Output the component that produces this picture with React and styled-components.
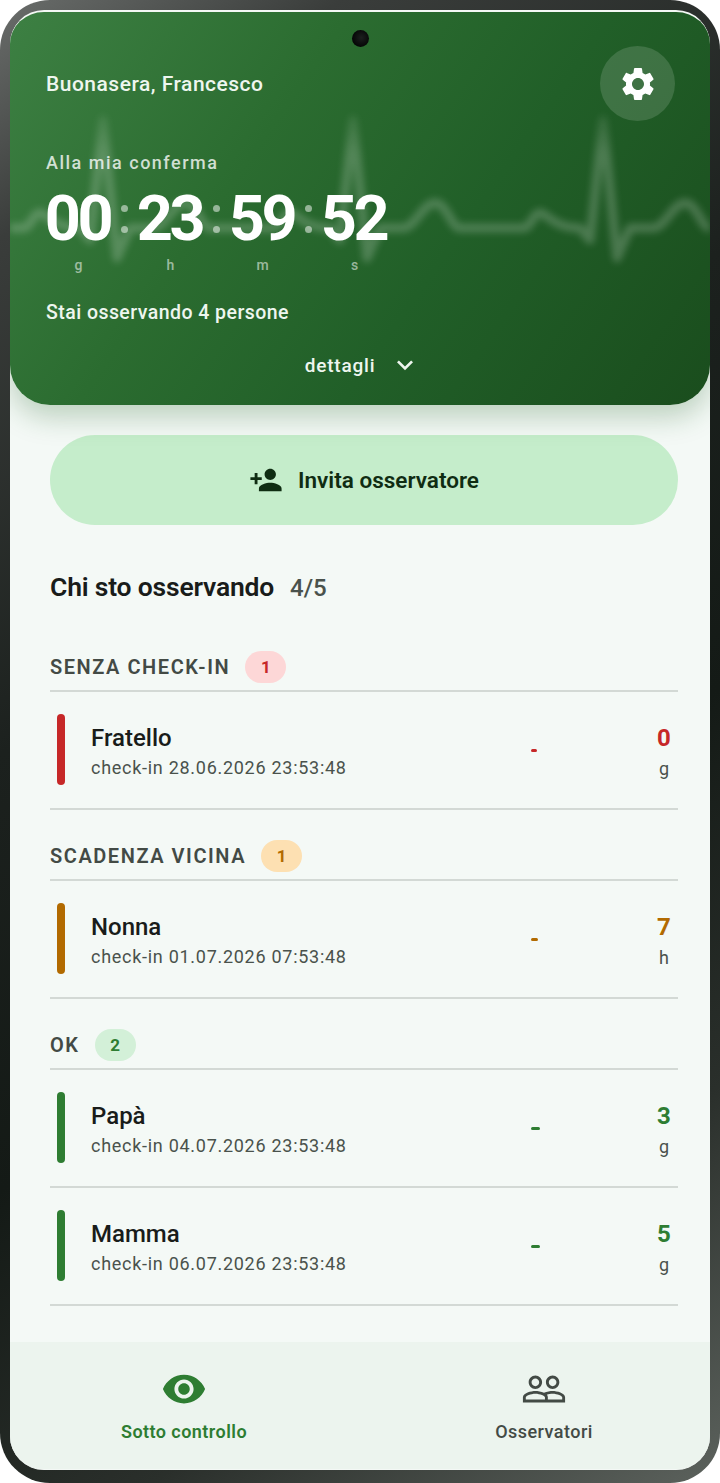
import React from 'react';
import styled, { createGlobalStyle } from 'styled-components';
import { MdSettings, MdPersonAdd, MdVisibility, MdPeopleOutline, MdKeyboardArrowDown } from 'react-icons/md';

const GlobalStyle = createGlobalStyle`
  html, body {
    margin: 0;
    padding: 0;
    background: #fff;
    font-family: Roboto, "Liberation Sans", sans-serif;
  }
  * { box-sizing: border-box; }
`;

// one heartbeat every 250px, c is the x of the spike
const buildWave = () => {
  let d = 'M0 228';
  [103, 353, 603].forEach((c) => {
    d += ` L${c - 80} 228 C${c - 72} 228 ${c - 70} 213 ${c - 63} 213 C${c - 56} 213 ${c - 50} 228 ${c - 23} 228`;
    d += ` L${c - 13} 240 L${c} 120 L${c + 14} 258 L${c + 27} 228 L${c + 50} 228`;
    d += ` C${c + 62} 228 ${c + 70} 203 ${c + 82} 203 C${c + 94} 203 ${c + 98} 228 ${c + 107} 228`;
  });
  return d;
};

const Device = styled.div`
  width: 720px;
  height: 1483px;
  padding: 10px 10px 13px;
  border-radius: 50px;
  background: linear-gradient(145deg, #6a6d6b 0%, #3a3d3b 12%, #1c211e 38%, #141a16 60%, #2a2f2b 80%, #5c625d 100%);
`;

const Screen = styled.div`
  position: relative;
  height: 100%;
  border-radius: 34px;
  overflow: hidden;
  background: #f4f9f6;
  display: flex;
  flex-direction: column;
  border-top: 2px solid #f4f8f5;
  border-bottom: 1px solid #f4f8f5;
`;

const HeroLayer = styled.div`
  position: relative;
  z-index: 1;
  flex: none;
`;

const Hero = styled.header`
  position: relative;
  height: 393px;
  padding: 0 36px;
  border-radius: 0 0 40px 40px;
  overflow: hidden;
  color: #fff;
  background: linear-gradient(125deg, #3d8043 0%, #2b6c30 35%, #215f28 62%, #1a4d1d 100%);
`;

const HeroGlow = styled.div`
  position: absolute;
  inset: 0;
  border-radius: 0 0 40px 40px;
  box-shadow: 0 12px 28px rgba(27, 94, 32, 0.26);
`;

const WaveSvg = styled.svg`
  position: absolute;
  left: 0;
  top: -12px;
  width: 700px;
  height: 405px;
  pointer-events: none;
  filter: blur(3.5px);
`;

const Camera = styled.div`
  position: absolute;
  top: 18px;
  left: 342px;
  width: 17px;
  height: 17px;
  border-radius: 50%;
  background: radial-gradient(circle at 55% 45%, #1c1f1e 0%, #050606 70%);
  z-index: 2;
`;

const GreetingRow = styled.div`
  position: relative;
  display: flex;
  justify-content: space-between;
  align-items: center;
  padding-top: 34px;
  margin-right: -1px;
`;

const Greeting = styled.div`
  font-size: 21px;
  font-weight: 500;
  letter-spacing: 0.5px;
  color: #eef6ef;
`;

const SettingsButton = styled.div`
  width: 75px;
  height: 75px;
  border-radius: 50%;
  background: rgba(255, 255, 255, 0.14);
  display: flex;
  align-items: center;
  justify-content: center;
  font-size: 40px;
  color: #fff;
`;

const TimerLabel = styled.div`
  position: relative;
  margin-top: 31px;
  font-size: 18px;
  font-weight: 500;
  letter-spacing: 1.5px;
  color: rgba(255, 255, 255, 0.78);
  line-height: 22px;
`;

const Timer = styled.div`
  position: relative;
  display: flex;
  margin-top: 13px;
`;

const TimeUnit = styled.div`
  width: 65px;
  display: flex;
  flex-direction: column;
  align-items: center;
`;

const Digits = styled.div`
  font-size: 63px;
  font-weight: 700;
  line-height: 64px;
  letter-spacing: -3.5px;
  margin-right: 2px;
  color: #fff;
  white-space: nowrap;
`;

const UnitLabel = styled.div`
  margin-top: 6px;
  font-size: 14px;
  line-height: 16px;
  font-weight: 500;
  color: rgba(255, 255, 255, 0.55);
`;

const Separator = styled.div`
  width: 27px;
  height: 64px;
  display: flex;
  flex-direction: column;
  align-items: center;
  justify-content: center;
  gap: 14px;
  padding-bottom: 1px;

  span {
    width: 7px;
    height: 7px;
    border-radius: 50%;
    background: rgba(255, 255, 255, 0.5);
  }
`;

const Watching = styled.div`
  position: relative;
  margin-top: 28px;
  font-size: 19.5px;
  line-height: 24px;
  font-weight: 500;
  letter-spacing: 0.45px;
  color: #eef6ef;
`;

const DetailsToggle = styled.div`
  position: relative;
  margin-top: 24px;
  padding-left: 6px;
  display: flex;
  justify-content: center;
  align-items: center;
  gap: 14px;
  font-size: 19px;
  font-weight: 500;
  letter-spacing: 0.8px;
  color: #eef6ef;

  svg { font-size: 32px; }
`;

const Body = styled.main`
  flex: 1;
  padding: 30px 32px 0 40px;
`;

const InviteButton = styled.div`
  height: 90px;
  border-radius: 45px;
  background: #c5edcb;
  display: flex;
  align-items: center;
  justify-content: center;
  gap: 15px;
  font-size: 22.5px;
  font-weight: 600;
  color: #0f2c12;

  svg { font-size: 34px; }
`;

const ListTitle = styled.div`
  margin-top: 46px;
  display: flex;
  align-items: baseline;
  gap: 16px;
  height: 32px;
`;

const TitleText = styled.h2`
  margin: 0;
  font-size: 26.5px;
  font-weight: 600;
  letter-spacing: -0.2px;
  line-height: 32px;
  color: #191c1a;
`;

const TitleCount = styled.span`
  font-size: 24px;
  font-weight: 500;
  color: #4a524c;
`;

const GroupHeader = styled.div`
  height: 48px;
  margin-top: ${(p) => p.$top}px;
  display: flex;
  align-items: center;
  gap: 15px;
  border-bottom: 2px solid #d3d9d5;
  font-size: 20px;
  font-weight: 600;
  letter-spacing: 1.55px;
  color: #434a45;
`;

const Count = styled.span`
  width: 41px;
  height: 32px;
  border-radius: 16px;
  display: flex;
  align-items: center;
  justify-content: center;
  font-size: 17px;
  font-weight: 700;
  letter-spacing: 0;
  background: ${(p) => p.$bg};
  color: ${(p) => p.$fg};
`;

const Row = styled.div`
  height: 118px;
  display: flex;
  align-items: center;
  padding: 0 6px 0 7px;
  border-bottom: 2px solid #d3d9d5;
`;

const StatusBar = styled.div`
  width: 8px;
  height: 71px;
  margin-bottom: 2px;
  border-radius: 4px;
  background: ${(p) => p.$color};
`;

const Person = styled.div`
  margin-left: 26px;
  padding-top: 2px;
  flex: 1;
`;

const Name = styled.div`
  font-size: 24px;
  font-weight: 500;
  line-height: 30px;
  color: #191c1a;
`;

const LastCheck = styled.div`
  margin-top: 3px;
  font-size: 18px;
  line-height: 24px;
  letter-spacing: 0.72px;
  color: #4a524c;
`;

const DashSlot = styled.div`
  width: 125px;
`;

const Dash = styled.div`
  width: ${(p) => p.$width}px;
  height: 3px;
  border-radius: 2px;
  background: ${(p) => p.$color};
`;

const Remaining = styled.div`
  width: 16px;
  padding-top: 4px;
  display: flex;
  flex-direction: column;
  align-items: center;
`;

const RemainingValue = styled.div`
  font-size: 24px;
  font-weight: 700;
  line-height: 30px;
  color: ${(p) => p.$color};
`;

const RemainingUnit = styled.div`
  margin-top: 4px;
  font-size: 18px;
  line-height: 24px;
  color: #4a524c;
`;

const BottomNav = styled.nav`
  flex: none;
  height: 127px;
  padding-left: 14px;
  display: grid;
  grid-template-columns: 320px 320px;
  column-gap: 40px;
  background: #ecf4ee;
`;

const NavItem = styled.div`
  display: flex;
  flex-direction: column;
  align-items: center;
  padding-top: 24px;
  font-size: 18px;
  line-height: 24px;
  letter-spacing: 0.45px;
  font-weight: ${(p) => (p.$active ? 600 : 500)};
  color: ${(p) => (p.$active ? '#2e7d32' : '#434a45')};

  svg { font-size: 46px; margin-bottom: 8px; }
`;

const RED = '#c62828';
const AMBER = '#b26a00';
const GREEN = '#2e7d32';

const groups = [
  {
    title: 'SENZA CHECK-IN', top: 41, badgeBg: '#fdd7d7', badgeFg: RED, color: RED, dash: 6,
    people: [{ name: 'Fratello', date: '28.06.2026 23:53:48', value: '0', unit: 'g' }],
  },
  {
    title: 'SCADENZA VICINA', top: 23, badgeBg: '#fde0b2', badgeFg: AMBER, color: AMBER, dash: 7,
    people: [{ name: 'Nonna', date: '01.07.2026 07:53:48', value: '7', unit: 'h' }],
  },
  {
    title: 'OK', top: 23, badgeBg: '#d3f0d8', badgeFg: GREEN, color: GREEN, dash: 9,
    people: [
      { name: 'Papà', date: '04.07.2026 23:53:48', value: '3', unit: 'g' },
      { name: 'Mamma', date: '06.07.2026 23:53:48', value: '5', unit: 'g' },
    ],
  },
];

const Unit = ({ value, label }) => (
  <TimeUnit>
    <Digits>{value}</Digits>
    <UnitLabel>{label}</UnitLabel>
  </TimeUnit>
);

const Dots = () => (
  <Separator>
    <span />
    <span />
  </Separator>
);

const App = () => (
  <>
    <GlobalStyle />
    <Device>
      <Screen>
        <HeroLayer>
          <HeroGlow />
          <Hero>
            <WaveSvg viewBox="0 0 700 405" fill="none">
              <defs>
                <linearGradient id="waveFade" x1="0" y1="108" x2="0" y2="260" gradientUnits="userSpaceOnUse">
                  <stop offset="0" stopColor="#fff" stopOpacity="0.06" />
                  <stop offset="0.3" stopColor="#fff" stopOpacity="0.2" />
                  <stop offset="1" stopColor="#fff" stopOpacity="0.2" />
                </linearGradient>
              </defs>
              <path
                d={buildWave()}
                transform="translate(-10 0)"
                stroke="url(#waveFade)"
                strokeWidth="9"
                strokeLinejoin="round"
                strokeLinecap="round"
              />
            </WaveSvg>
            <Camera />
            <GreetingRow>
              <Greeting>Buonasera, Francesco</Greeting>
              <SettingsButton>
                <MdSettings />
              </SettingsButton>
            </GreetingRow>
            <TimerLabel>Alla mia conferma</TimerLabel>
            <Timer>
              <Unit value="00" label="g" />
              <Dots />
              <Unit value="23" label="h" />
              <Dots />
              <Unit value="59" label="m" />
              <Dots />
              <Unit value="52" label="s" />
            </Timer>
            <Watching>Stai osservando 4 persone</Watching>
            <DetailsToggle>
              dettagli
              <MdKeyboardArrowDown />
            </DetailsToggle>
          </Hero>
        </HeroLayer>
        <Body>
          <InviteButton>
            <MdPersonAdd />
            Invita osservatore
          </InviteButton>
          <ListTitle>
            <TitleText>Chi sto osservando</TitleText>
            <TitleCount>4/5</TitleCount>
          </ListTitle>
          {groups.map((group) => (
            <section key={group.title}>
              <GroupHeader $top={group.top}>
                {group.title}
                <Count $bg={group.badgeBg} $fg={group.badgeFg}>{group.people.length}</Count>
              </GroupHeader>
              {group.people.map((person) => (
                <Row key={person.name}>
                  <StatusBar $color={group.color} />
                  <Person>
                    <Name>{person.name}</Name>
                    <LastCheck>check-in {person.date}</LastCheck>
                  </Person>
                  <DashSlot>
                    <Dash $color={group.color} $width={group.dash} />
                  </DashSlot>
                  <Remaining>
                    <RemainingValue $color={group.color}>{person.value}</RemainingValue>
                    <RemainingUnit>{person.unit}</RemainingUnit>
                  </Remaining>
                </Row>
              ))}
            </section>
          ))}
        </Body>
        <BottomNav>
          <NavItem $active>
            <MdVisibility />
            Sotto controllo
          </NavItem>
          <NavItem>
            <MdPeopleOutline />
            Osservatori
          </NavItem>
        </BottomNav>
      </Screen>
    </Device>
  </>
);

export default App;
